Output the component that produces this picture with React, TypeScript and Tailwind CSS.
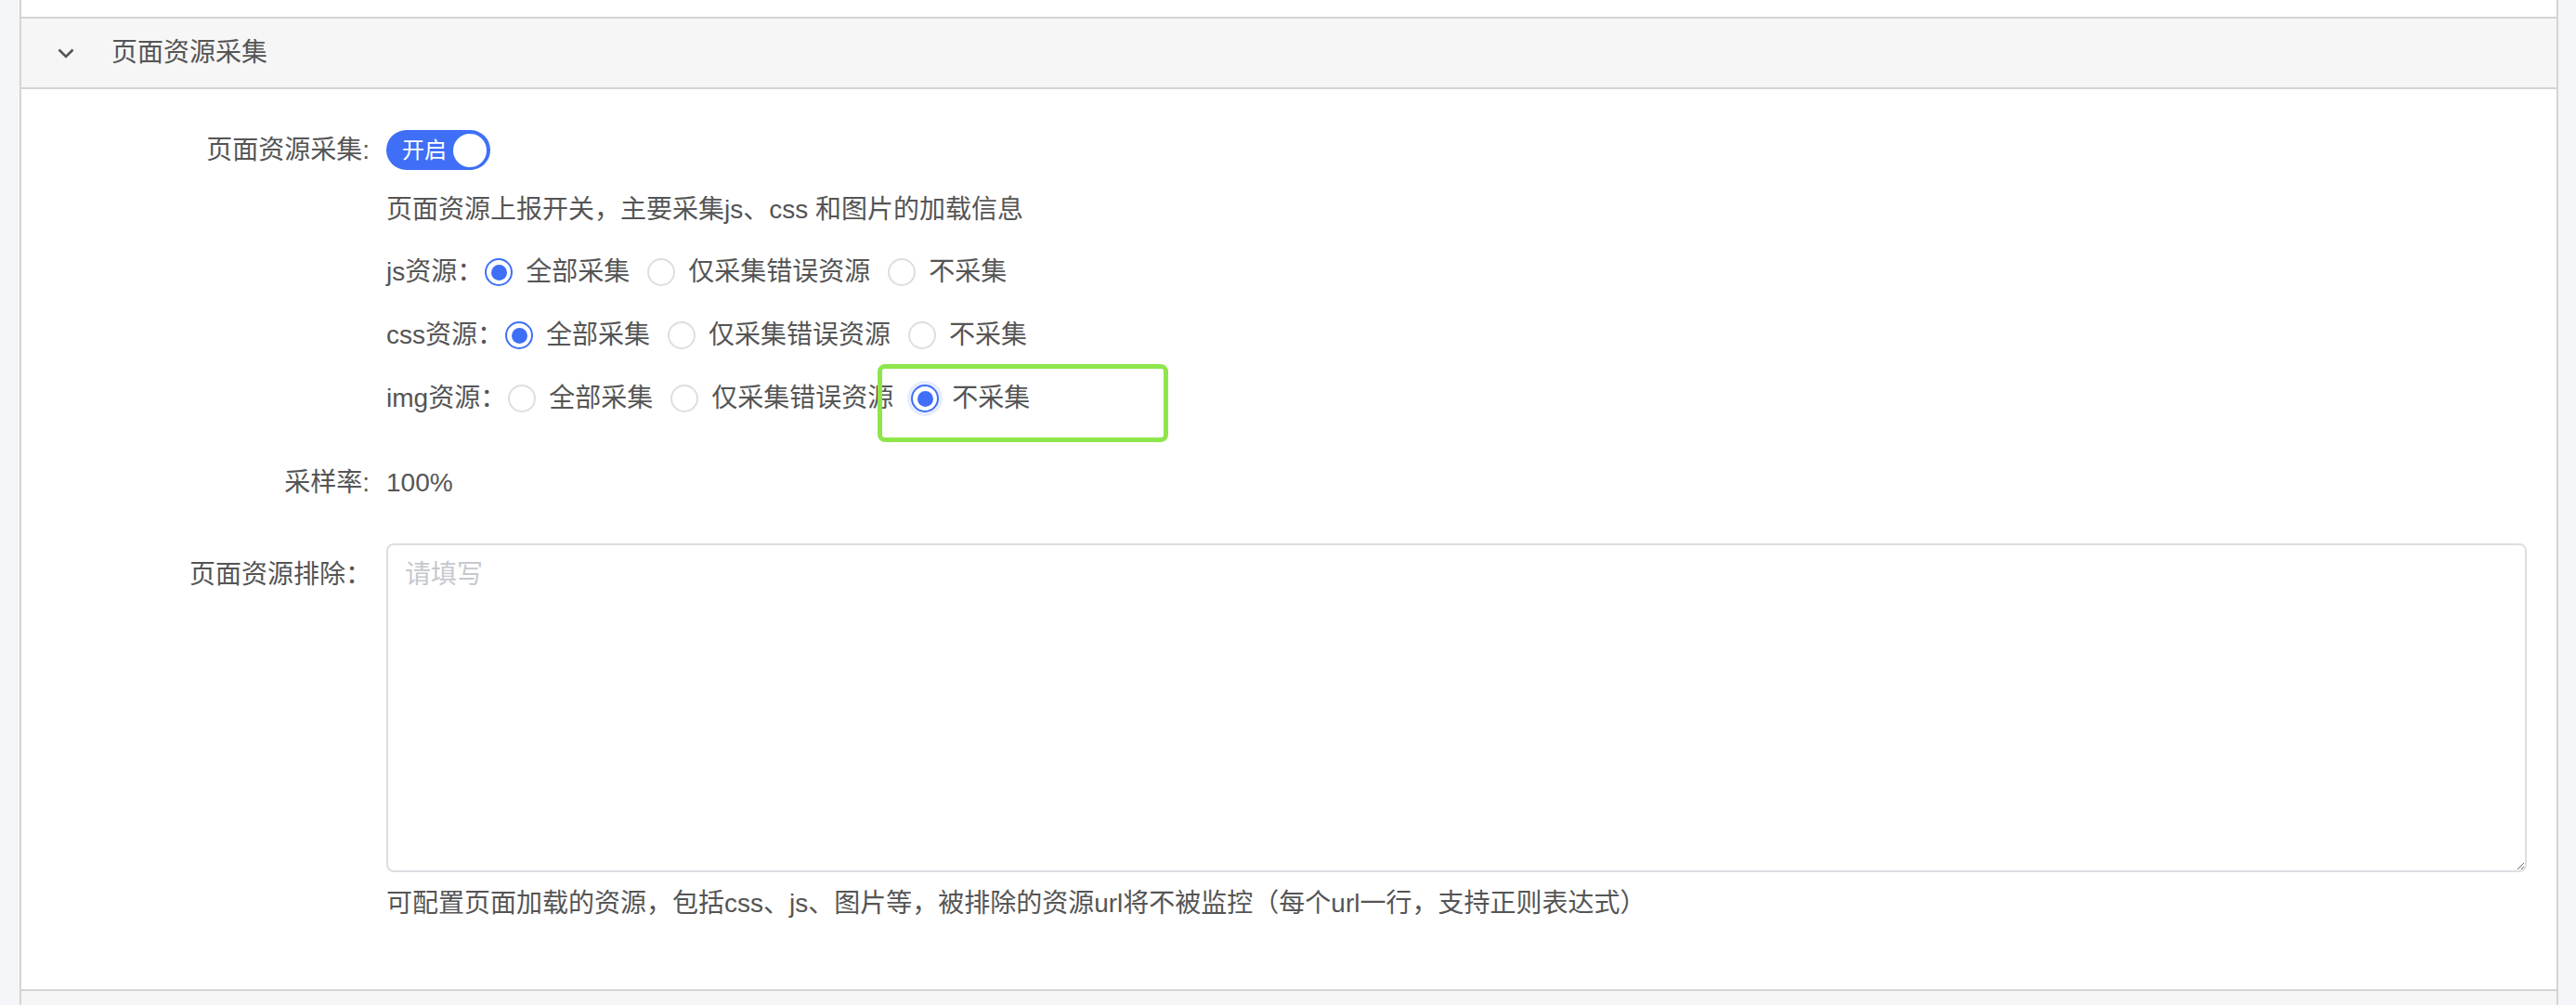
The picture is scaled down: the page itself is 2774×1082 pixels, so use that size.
import { useState } from 'react'

const BLUE = '#3f6ff6'
const FONT = { fontFamily: '"Liberation Sans", "Noto Sans CJK SC", sans-serif' }

type Choice = 'all' | 'error' | 'none'

const OPTIONS: { value: Choice; label: string }[] = [
  { value: 'all', label: '全部采集' },
  { value: 'error', label: '仅采集错误资源' },
  { value: 'none', label: '不采集' },
]

function Radio({ checked, focused }: { checked: boolean; focused?: boolean }) {
  return (
    <span
      className={
        'flex h-[30px] w-[30px] shrink-0 items-center justify-center rounded-full border-2 bg-white ' +
        (checked ? 'border-[#3f6ff6] ' : 'border-[#dcdee2] ') +
        (focused ? 'shadow-[0_0_0_4px_rgba(63,111,246,0.12)]' : '')
      }
    >
      {checked && <span className="h-[17px] w-[17px] rounded-full bg-[#3f6ff6]" />}
    </span>
  )
}

function ResourceRow({
  name,
  value,
  focused,
  highlight,
}: {
  name: string
  value: Choice
  focused?: boolean
  highlight?: boolean
}) {
  return (
    <div className="flex h-[44px] items-center">
      <span className="mr-[2px] leading-[44px]">{name}资源：</span>
      {OPTIONS.map((o) => (
        <label key={o.value} className="relative mr-[19px] flex items-center">
          <Radio checked={o.value === value} focused={focused && o.value === value} />
          <span className="ml-[14px] leading-[44px]">{o.label}</span>
          {highlight && o.value === value && (
            <span className="pointer-events-none absolute top-[-15px] left-[-36px] h-[84px] w-[313px] rounded-[8px] border-[5px] border-[#8ee64c]" />
          )}
        </label>
      ))}
    </div>
  )
}

export default function App() {
  const [on] = useState(true)

  return (
    <div className="flex h-[1082px] overflow-hidden bg-[#f5f6fa] text-[28px] text-[#555]" style={FONT}>
      <div className="mr-[19px] ml-[21px] flex-1 border-x-2 border-[#d4d4d4] bg-white">
        <div className="h-[18px]" />
        <div className="flex h-[78px] items-center border-y-2 border-[#d4d4d4] bg-[#f6f6f6]">
          <svg className="ml-[39px]" width="18" height="11" viewBox="0 0 18 11" fill="none">
            <polyline points="1.5,1.5 9,9 16.5,1.5" stroke="#555" strokeWidth="2.6" />
          </svg>
          <span className="ml-[40px] leading-[40px]">页面资源采集</span>
        </div>

        <div className="pt-[44px] pr-[32px] pb-[72px]">
          <div className="flex">
            <div className="w-[377px] shrink-0 pr-[2px] text-right leading-[43px]">页面资源采集:</div>
            <div className="ml-[16px] flex flex-1 flex-col">
              <div className="flex">
                <span
                  className="flex h-[43px] w-[112px] items-center justify-between rounded-full pr-[4px] pl-[17px]"
                  style={{ backgroundColor: on ? BLUE : '#ccc' }}
                >
                  <span className="text-[24px] leading-[30px] text-white">开启</span>
                  <span className="h-[36px] w-[36px] rounded-full bg-white" />
                </span>
              </div>
              <div className="mt-[23px] leading-[40px]">页面资源上报开关，主要采集js、css 和图片的加载信息</div>
              <div className="mt-[25px] flex flex-col gap-[24px]">
                <ResourceRow name="js" value="all" />
                <ResourceRow name="css" value="all" />
                <ResourceRow name="img" value="none" focused highlight />
              </div>
            </div>
          </div>

          <div className="mt-[47px] flex">
            <div className="w-[377px] shrink-0 pr-[2px] text-right leading-[44px]">采样率:</div>
            <div className="ml-[16px] leading-[44px]">100%</div>
          </div>

          <div className="mt-[43px] flex">
            <div className="w-[377px] shrink-0 text-right leading-[68px]">页面资源排除：</div>
            <div className="ml-[16px] flex flex-1 flex-col">
              <textarea
                placeholder="请填写"
                className="h-[354px] w-full rounded-[8px] border-2 border-[#dcdee2] px-[18px] py-[10px] text-[28px] leading-[44px] text-[#555] outline-none placeholder:text-[#c5c8ce]"
                style={FONT}
              />
              <div className="mt-[14px] leading-[40px]">
                可配置页面加载的资源，包括css、js、图片等，被排除的资源url将不被监控（每个url一行，支持正则表达式）
              </div>
            </div>
          </div>
        </div>

        <div className="h-[80px] border-t-2 border-[#d4d4d4] bg-[#f6f6f6]" />
      </div>
    </div>
  )
}
